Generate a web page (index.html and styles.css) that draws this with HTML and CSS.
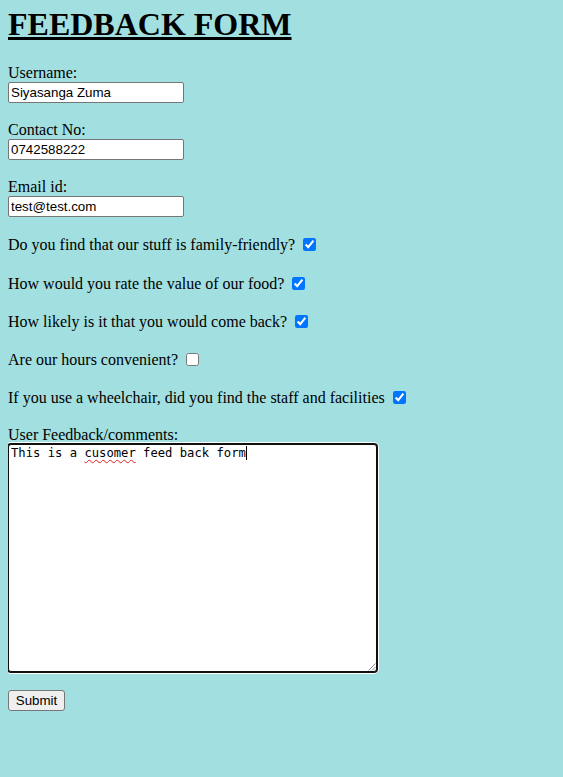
FILE: index.html
```html
<!DOCTYPE html>
<html lang="en">
<head>
<meta charset="utf-8">
<title>Feedback Form</title>
<link rel="stylesheet" href="styles.css">
</head>
<body>
<h1 class="title">FEEDBACK FORM</h1>
<form class="form">
  <div class="field">
    <label class="label">Username:</label>
    <input class="text" type="text" value="Siyasanga Zuma">
  </div>
  <div class="field">
    <label class="label">Contact No:</label>
    <input class="text" type="text" value="0742588222">
  </div>
  <div class="field">
    <label class="label">Email id:</label>
    <input class="text" type="text" value="test@test.com">
  </div>
  <div class="question">Do you find that our stuff is family-friendly? <input class="check" type="checkbox" checked></div>
  <div class="question">How would you rate the value of our food? <input class="check" type="checkbox" checked></div>
  <div class="question">How likely is it that you would come back? <input class="check" type="checkbox" checked></div>
  <div class="question">Are our hours convenient? <input class="check" type="checkbox"></div>
  <div class="question">If you use a wheelchair, did you find the staff and facilities <input class="check" type="checkbox" checked></div>
  <div class="comments-field">
    <label class="label">User Feedback/comments:</label>
    <div class="comments">This is a <span class="misspelt">cusomer</span> feed back form<span class="caret"></span><svg class="grip" width="9" height="9" viewBox="0 0 9 9"><path d="M8.5 1.5 L1.5 8.5 M8.5 5 L5 8.5" stroke="#8a8a8a" stroke-width="1" fill="none"/></svg></div>
  </div>
  <button class="submit" type="button">Submit</button>
</form>
</body>
</html>
```

FILE: styles.css
```css
html {
  background: #a2dfe0;
}
body {
  margin: 6px 8px 8px 8px;
  font-family: "Liberation Serif", "Times New Roman", serif;
  font-size: 16px;
  color: #000;
}
.title {
  margin: 0 0 21.44px 0;
  font-size: 32px;
  font-weight: bold;
  text-decoration: underline;
  line-height: normal;
}
.form {
  margin: 0;
}
.field {
  margin-bottom: 18px;
}
.label {
  display: block;
  line-height: 18px;
}
.text {
  display: block;
  box-sizing: border-box;
  width: 176px;
  height: 21px;
  margin: 0;
  padding: 1px 2px;
  border: 1px solid #767676;
  border-radius: 2px;
  background: #fff;
  font-family: "Liberation Sans", Arial, sans-serif;
  font-size: 13.33px;
  color: #000;
}
.question {
  line-height: 20px;
  margin-bottom: 18.1px;
}
.check {
  width: 13px;
  height: 13px;
  margin: 3px 3px 3px 4px;
  vertical-align: -1px;
  accent-color: #0075ff;
}
.comments-field {
  margin-bottom: 18px;
}
.comments {
  position: relative;
  box-sizing: border-box;
  width: 369px;
  height: 228px;
  margin-top: 0;
  padding: 1px 2px;
  border: 1px solid #101010;
  border-radius: 3px;
  box-shadow: 0 0 0 1px #101010, 0 0 0 2px #ffffff;
  background: #fff;
  font-family: "DejaVu Sans Mono", "Liberation Mono", monospace;
  font-size: 12.2px;
  line-height: normal;
  white-space: pre;
}
.misspelt {
  text-decoration: underline wavy #e02020;
  text-decoration-thickness: 1px;
  text-underline-offset: 2px;
}
.caret {
  display: inline-block;
  width: 1px;
  height: 14px;
  background: #000;
  vertical-align: -3px;
}
.grip {
  position: absolute;
  right: 0;
  bottom: 0;
}
.submit {
  display: block;
  box-sizing: border-box;
  width: 57px;
  height: 21px;
  margin: 0;
  padding: 1px 6px;
  border: 1px solid #767676;
  border-radius: 3px;
  background: #efefef;
  font-family: "Liberation Sans", Arial, sans-serif;
  font-size: 13.33px;
  color: #000;
}
```
